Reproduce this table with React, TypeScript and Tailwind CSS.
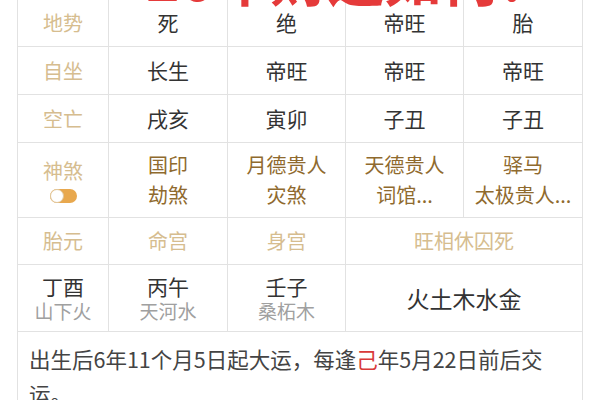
import React from "react";

const font = { fontFamily: '"Noto Sans CJK SC", "Noto Sans", sans-serif' };

function Cell({ children, className = "" }: { children: React.ReactNode; className?: string }) {
  return (
    <div className={`flex flex-col items-center justify-center border-r border-b border-[#e2e2e2] ${className}`}>
      {children}
    </div>
  );
}

function Toggle() {
  return (
    <div className="relative mt-[5px] h-[14px] w-[27px] rounded-full bg-[#e8a84e]">
      <div className="absolute left-0 top-0 h-[14px] w-[14px] rounded-full border border-[#e0c79d] bg-white" />
    </div>
  );
}

export default function App() {
  const label = "text-[20px] text-[#d6bd8f]";
  const val = "text-[21px] text-[#333333]";
  const gold = "text-[20px] leading-[30px] text-[#8f6a2e]";
  return (
    <div className="relative h-[400px] w-[600px] overflow-hidden bg-white" style={font}>
      <div className="ml-[17px] w-[566px] border-l border-[#e2e2e2]">
        <div className="grid grid-cols-[91px_119px_118px_118px_119px]">
          {/* row 1 */}
          <Cell className="h-[47px]"><span className={label}>地势</span></Cell>
          <Cell className="h-[47px]"><span className={val}>死</span></Cell>
          <Cell className="h-[47px]"><span className={val}>绝</span></Cell>
          <Cell className="h-[47px]"><span className={val}>帝旺</span></Cell>
          <Cell className="h-[47px]"><span className={val}>胎</span></Cell>
          {/* row 2 */}
          <Cell className="h-[48px]"><span className={label}>自坐</span></Cell>
          <Cell className="h-[48px]"><span className={val}>长生</span></Cell>
          <Cell className="h-[48px]"><span className={val}>帝旺</span></Cell>
          <Cell className="h-[48px]"><span className={val}>帝旺</span></Cell>
          <Cell className="h-[48px]"><span className={val}>帝旺</span></Cell>
          {/* row 3 */}
          <Cell className="h-[48px]"><span className={label}>空亡</span></Cell>
          <Cell className="h-[48px]"><span className={val}>戌亥</span></Cell>
          <Cell className="h-[48px]"><span className={val}>寅卯</span></Cell>
          <Cell className="h-[48px]"><span className={val}>子丑</span></Cell>
          <Cell className="h-[48px]"><span className={val}>子丑</span></Cell>
          {/* row 4 */}
          <Cell className="h-[75px]">
            <span className={`${label} leading-[26px]`}>神煞</span>
            <Toggle />
          </Cell>
          <Cell className="h-[75px]"><span className={gold}>国印</span><span className={gold}>劫煞</span></Cell>
          <Cell className="h-[75px]"><span className={gold}>月德贵人</span><span className={gold}>灾煞</span></Cell>
          <Cell className="h-[75px]"><span className={gold}>天德贵人</span><span className={gold}>词馆...</span></Cell>
          <Cell className="h-[75px]"><span className={gold}>驿马</span><span className={gold}>太极贵人...</span></Cell>
          {/* row 5 */}
          <Cell className="h-[47px]"><span className={label}>胎元</span></Cell>
          <Cell className="h-[47px]"><span className={label}>命宫</span></Cell>
          <Cell className="h-[47px]"><span className={label}>身宫</span></Cell>
          <Cell className="col-span-2 h-[47px]"><span className={label}>旺相休囚死</span></Cell>
          {/* row 6 */}
          <Cell className="h-[67px]">
            <span className="text-[21px] leading-[26px] text-[#333333]">丁酉</span>
            <span className="text-[19px] leading-[24px] text-[#a0a0a0]">山下火</span>
          </Cell>
          <Cell className="h-[67px]">
            <span className="text-[21px] leading-[26px] text-[#333333]">丙午</span>
            <span className="text-[19px] leading-[24px] text-[#a0a0a0]">天河水</span>
          </Cell>
          <Cell className="h-[67px]">
            <span className="text-[21px] leading-[26px] text-[#333333]">壬子</span>
            <span className="text-[19px] leading-[24px] text-[#a0a0a0]">桑柘木</span>
          </Cell>
          <Cell className="col-span-2 h-[67px]"><span className="text-[23px] text-[#333333]">火土木水金</span></Cell>
        </div>
        <div className="border-r border-[#e2e2e2] pl-[11px] pr-[8px] pt-[9px] text-[21.5px] leading-[35px] text-[#444444]">
          出生后6年11个月5日起大运，每逢<span className="text-[#d93a3a]">己</span>年5月22日前后交运。
        </div>
      </div>
      <div className="pointer-events-none absolute left-[146px] top-[-59px] whitespace-nowrap text-[57px] font-bold leading-[70px] text-[#e53a3a]">
        26年财运如何？
      </div>
    </div>
  );
}
